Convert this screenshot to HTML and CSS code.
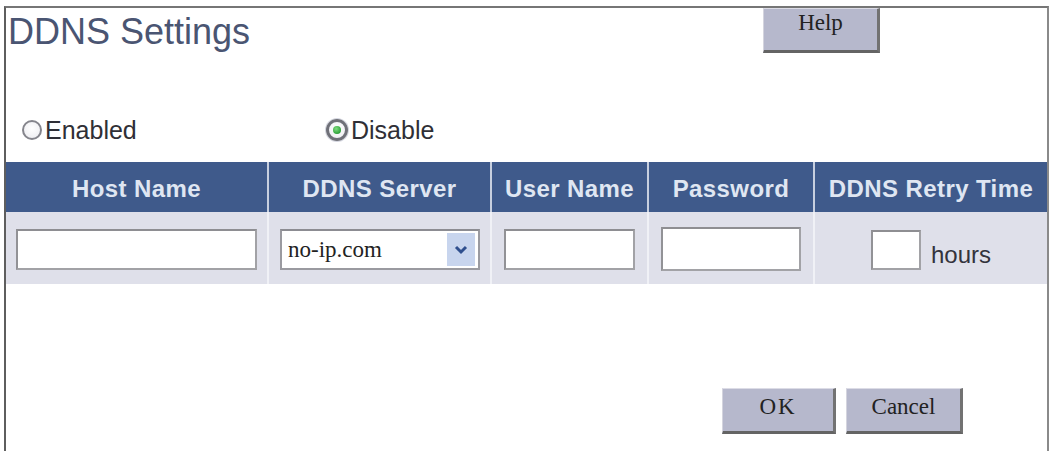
FILE: index.html
```html
<!DOCTYPE html>
<html lang="en">
<head>
<meta charset="utf-8">
<title>DDNS Settings</title>
<link rel="stylesheet" href="styles.css">
</head>
<body>
<div class="frame">
  <div class="top">
    <h1 class="title">DDNS Settings</h1>
    <button class="btn btn-help" type="button">Help</button>
  </div>

  <div class="radios">
    <label class="radio radio-enabled"><span class="dot"></span>Enabled</label>
    <label class="radio"><span class="dot dot-on"></span>Disable</label>
  </div>

  <div class="grid">
    <div class="th">Host Name</div>
    <div class="th">DDNS Server</div>
    <div class="th">User Name</div>
    <div class="th">Password</div>
    <div class="th">DDNS Retry Time</div>

    <div class="td"><input class="field field-host" type="text"></div>
    <div class="td td-sel">
      <div class="select">
        <span class="select-text">no-ip.com</span>
        <span class="select-arrow">
          <svg width="14" height="10" viewBox="0 0 14 10"><path d="M2 2 L7 7 L12 2" fill="none" stroke="#2f4f8e" stroke-width="3"/></svg>
        </span>
      </div>
    </div>
    <div class="td"><input class="field field-user" type="text"></div>
    <div class="td"><input class="field field-pass" type="password"></div>
    <div class="td td-retry">
      <input class="field field-retry" type="text">
      <span class="unit">hours</span>
    </div>
  </div>

  <div class="actions">
    <button class="btn btn-ok" type="button">OK</button>
    <button class="btn btn-cancel" type="button">Cancel</button>
  </div>
</div>
</body>
</html>
```

FILE: styles.css
```css
html, body {
  margin: 0;
  padding: 0;
  background: #ffffff;
}

body {
  font-family: "Liberation Sans", Arial, sans-serif;
  overflow: hidden;
}

.frame {
  margin: 6px 1px 0 4px;
  height: 445px;
  border-top: 2px solid #767676;
  border-left: 2px solid #5e5e5e;
  border-right: 2px solid #8a8a8a;
  box-sizing: border-box;
}

/* top row */
.top {
  display: flex;
  align-items: flex-start;
  height: 45px;
}

.title {
  margin: 6px 0 0 2px;
  font-family: "Liberation Sans", Arial, sans-serif;
  font-weight: normal;
  font-size: 36px;
  line-height: 36px;
  color: #4a5572;
}

.btn {
  font-family: "Liberation Serif", "Times New Roman", serif;
  font-size: 23px;
  color: #222;
  background: #b6b8cc;
  border-top: 1px solid #dcdce6;
  border-left: 1px solid #d4d4de;
  border-right: 3px solid #727272;
  border-bottom: 3px solid #646464;
  box-sizing: border-box;
  padding: 0;
  cursor: pointer;
}

.btn-help {
  margin-left: auto;
  margin-right: 167px;
  width: 117px;
  height: 45px;
  padding-bottom: 14px;
}

/* radios */
.radios {
  display: flex;
  align-items: center;
  height: 30px;
  margin-top: 62px;
  padding-left: 16px;
}

.radio {
  display: flex;
  align-items: center;
  gap: 3px;
  font-size: 25px;
  color: #2f2f36;
}

.radio-enabled {
  width: 304px;
}

.dot {
  width: 20px;
  height: 20px;
  border-radius: 50%;
  border: 2px solid #85858c;
  background: radial-gradient(circle at 50% 40%, #ffffff 0%, #f1f1f4 70%, #dcdce3 100%);
  box-sizing: border-box;
  display: flex;
  align-items: center;
  justify-content: center;
}

.dot-on {
  width: 22px;
  height: 22px;
  border: 3px solid #6f7078;
  box-shadow: 0 0 0 1px #d4d6e0;
}

.dot-on::after {
  content: "";
  width: 8px;
  height: 8px;
  border-radius: 50%;
  background: radial-gradient(circle at 40% 35%, #7fdc7f 0%, #2fa23a 70%, #1f7a2a 100%);
}

/* table */
.grid {
  display: grid;
  grid-template-columns: 261px 223px 157px 166px 234px;
  grid-template-rows: 50px 72px;
  margin-top: 17px;
}

.th {
  background: #3f5a8b;
  color: #dfe6f2;
  font-weight: bold;
  font-size: 24px;
  letter-spacing: 0.4px;
  display: flex;
  align-items: center;
  justify-content: center;
  padding-top: 4px;
  box-sizing: border-box;
  border-left: 2px solid #c7cfdf;
}

.th:first-child {
  border-left: none;
}

.td {
  background: #dfe0ea;
  display: flex;
  align-items: center;
  justify-content: center;
  padding-top: 3px;
  box-sizing: border-box;
  border-left: 2px solid #f0f1f6;
}

.td:nth-child(6) {
  border-left: none;
}

.field {
  height: 41px;
  border: 2px solid #a2a2a6;
  border-top-color: #8e8e92;
  border-left-color: #929296;
  background: #ffffff;
  box-sizing: border-box;
  margin: 0;
  padding: 0 4px;
  font-size: 18px;
}

.field-host { width: 241px; }
.field-user { width: 131px; }
.field-pass { width: 140px; margin-top: -1px; height: 44px; }
.field-retry { width: 50px; height: 40px; }

.td-sel {
  justify-content: flex-start;
  padding-left: 11px;
}

.select {
  display: flex;
  align-items: center;
  width: 200px;
  height: 41px;
  border: 2px solid #9a9aa0;
  border-top-color: #8c8c92;
  background: #ffffff;
  box-sizing: border-box;
  padding-right: 3px;
}

.select-text {
  flex: 1;
  padding-left: 6px;
  font-family: "Liberation Serif", "Times New Roman", serif;
  font-size: 23px;
  color: #222;
}

.select-arrow {
  width: 28px;
  height: 33px;
  background: #c8d5ee;
  display: flex;
  align-items: center;
  justify-content: center;
}

.td-retry {
  align-items: flex-end;
  padding-bottom: 14px;
  gap: 10px;
}

.unit {
  font-size: 24px;
  line-height: 24px;
  padding-bottom: 3px;
  color: #33333c;
}

/* bottom buttons */
.actions {
  display: flex;
  justify-content: flex-end;
  gap: 10px;
  margin-top: 104px;
  margin-right: 84px;
}

.btn-ok {
  width: 114px;
  height: 46px;
  padding-bottom: 6px;
  letter-spacing: 2px;
}

.btn-cancel {
  width: 117px;
  height: 46px;
  padding-bottom: 6px;
}
```
